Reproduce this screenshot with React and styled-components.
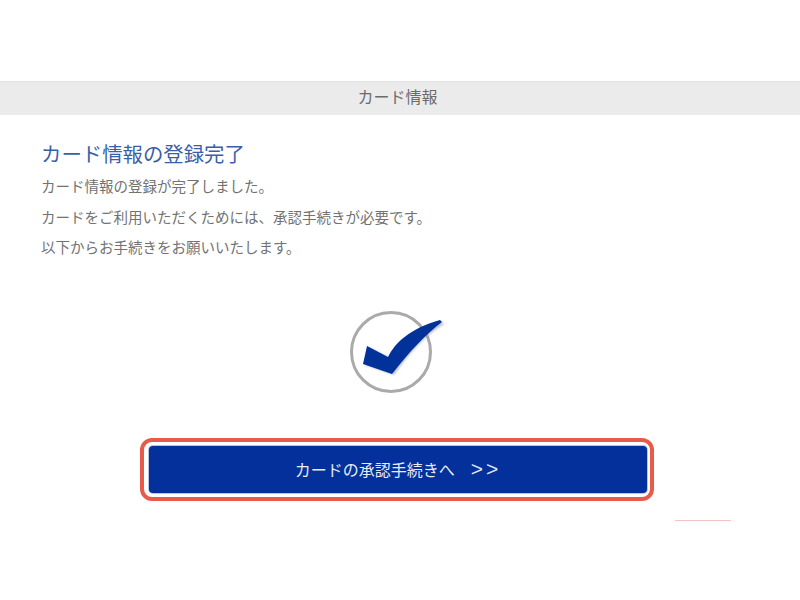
import React from "react";
import styled, { createGlobalStyle } from "styled-components";

const Global = createGlobalStyle`
  html, body { margin: 0; padding: 0; background: #fff; }
  body { font-family: "Liberation Sans", "Noto Sans CJK JP", sans-serif; }
`;
const Page = styled.div`
  width: 800px; height: 600px; overflow: hidden; display: flex; flex-direction: column;
  padding-top: 81px; box-sizing: border-box;
`;
const Band = styled.header`
  height: 34px; background: #ebebeb; border-top: 1px solid #e3e3e3; box-sizing: border-box;
  display: flex; align-items: center; justify-content: center;
  font-size: 16px; color: #6b6b6b; padding: 0 5px 5px 0;
`;
const Content = styled.section`
  padding: 26px 41px 0; display: flex; flex-direction: column;
`;
const Title = styled.h2`
  margin: 0 0 3px; font-size: 20.4px; line-height: 28px; font-weight: 400; color: #3a5fa8;
`;
const Line = styled.p`
  margin: 0; font-size: 14.5px; line-height: 30.5px; color: #727272; height: 30.5px; white-space: nowrap;
`;
const Mark = styled.div`
  display: flex; justify-content: center; margin: 42px 2px 0 0;
`;
const Highlight = styled.div`
  align-self: center; margin: 42px 6px 0 0; width: 514px; height: 63px; box-sizing: border-box;
  border: 4px solid #e85a4a; border-radius: 12px; padding: 4px 3px 4px 5px; display: flex;
`;
const ActionButton = styled.button`
  flex: 1; border: 0; background: #03309a; border-radius: 4px; color: #e8ecf6;
  box-shadow: 0 0 0 1px #b9c5e0;
  font: 400 16px "Liberation Sans", "Noto Sans CJK JP", sans-serif; padding: 0 3px 0 0; white-space: pre;
`;
const Chevrons = styled.span`
  font-size: 21px; font-weight: 300; letter-spacing: 3px; margin-right: -3px; color: #dfe5f3;
`;
const Rule = styled.div`
  align-self: flex-end; width: 56px; height: 1px; background: #f2c4c4; margin: 19px 69px 0 0;
`;

export default function App() {
  return (
    <Page>
      <Global />
      <Band>カード情報</Band>
      <Content>
        <Title>カード情報の登録完了</Title>
        <Line>カード情報の登録が完了しました。</Line>
        <Line>カードをご利用いただくためには、承認手続きが必要です。</Line>
        <Line>以下からお手続きをお願いいたします。</Line>
      </Content>
      <Mark>
        <svg width="100" height="90" viewBox="0 0 100 90" aria-hidden="true">
          <defs>
            <filter id="s" x="-20%" y="-20%" width="140%" height="140%">
              <feGaussianBlur stdDeviation="0.6" />
            </filter>
            <filter id="d" x="-20%" y="-20%" width="140%" height="140%">
              <feGaussianBlur stdDeviation="1.2" />
            </filter>
          </defs>
          <circle cx="42" cy="46" r="39.5" fill="none" stroke="#aaaaaa" strokeWidth="3" />
          <path
            d="M20 41 L41 52 C49 39 64 25 93 16 L95 18 C78 28 60 47 45 69 L16 59 Z"
            fill="#8a94b8"
            opacity="0.6"
            filter="url(#d)"
          />
          <path
            d="M18 40 L39 51 C46 37 60 23 91 14 L93 16 C78 27 60 46 43 68 L14 58 Z"
            fill="#03309a"
            filter="url(#s)"
          />
        </svg>
      </Mark>
      <Highlight>
        <ActionButton>カードの承認手続きへ　<Chevrons>&gt;&gt;</Chevrons></ActionButton>
      </Highlight>
      <Rule />
    </Page>
  );
}
